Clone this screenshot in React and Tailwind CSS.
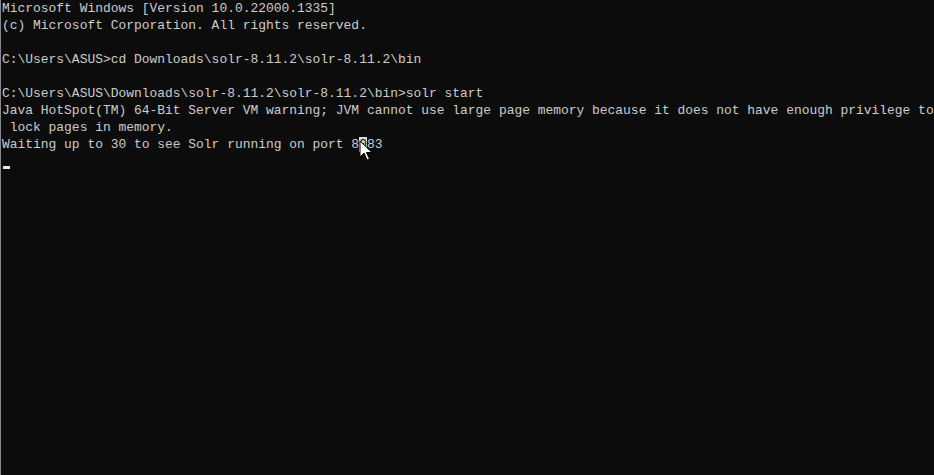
export default function App() {
  const lines = [
    "Microsoft Windows [Version 10.0.22000.1335]",
    "(c) Microsoft Corporation. All rights reserved.",
    "",
    "C:\\Users\\ASUS>cd Downloads\\solr-8.11.2\\solr-8.11.2\\bin",
    "",
    "C:\\Users\\ASUS\\Downloads\\solr-8.11.2\\solr-8.11.2\\bin>solr start",
    "Java HotSpot(TM) 64-Bit Server VM warning; JVM cannot use large page memory because it does not have enough privilege to",
    " lock pages in memory.",
  ];
  return (
    <div className="w-[934px] h-[475px] bg-[#0c0c0c] border-l border-l-[#8a8a8a] flex overflow-hidden">
      <div className="flex-1 relative pl-px pt-0 text-[#cccccc] text-[12.95px] leading-[17px] font-['Liberation_Mono',monospace] whitespace-pre">
        {lines.map((l, i) => (
          <div key={i} className="h-[17px]">{l}</div>
        ))}
        <div className="h-[17px]">
          Waiting up to 30 to see Solr running on port 8<span className="bg-[#d8d8d8] text-[#0c0c0c]">0</span>83
        </div>
        <div className="h-[17px] flex items-end">
          <div className="w-[7px] h-[3px] bg-[#e6e6e6] mb-[1px] ml-px"></div>
        </div>
        <svg className="absolute left-[358px] top-[140px]" width="14" height="22" viewBox="0 0 14 22">
          <path d="M1 1 L1 17 L5 13 L8 20 L10.5 19 L7.5 12.5 L13 12.5 Z" fill="#ffffff" stroke="#000000" strokeWidth="1" strokeLinejoin="round" />
        </svg>
      </div>
      <div className="w-[2px] bg-[#5a5a5a]"></div>
      <div className="w-[2px] bg-[#000000]"></div>
    </div>
  );
}
